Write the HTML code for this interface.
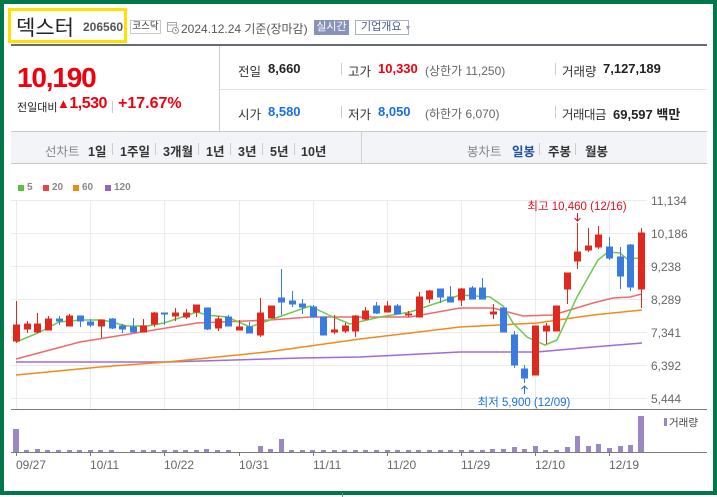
<!DOCTYPE html>
<html><head><meta charset="utf-8">
<style>
*{margin:0;padding:0;box-sizing:border-box}
body{width:717px;height:497px;background:#fff;font-family:"Liberation Sans","Noto Sans CJK KR",sans-serif;position:relative;overflow:hidden;color:#333}
.a{position:absolute;white-space:nowrap}
.frame{position:absolute;left:0;top:0;width:717px;height:495px;border:4px solid #00794a;border-top-width:4px}
.lbl{font-size:12.5px;color:#333}
.val{font-size:13px;font-weight:bold;color:#222}
.red{color:#f0000f}.blue{color:#1a6fe0}
.sep{position:absolute;width:1px;height:12px;background:#ccc}
.pb{font-size:12.5px;color:#333;font-weight:bold}
</style></head><body>
<!-- header -->
<div class="a" style="left:8px;top:8px;width:119px;height:35px;border:3px solid #ffe000"></div>
<div class="a" style="left:16px;top:12px;font-size:21px;color:#222">덱스터</div>
<div class="a" style="left:83px;top:20px;font-size:12px;font-weight:bold;color:#555">206560</div>
<div class="a" style="left:130px;top:20px;width:31px;height:14px;border:1px solid #c8c8c8;font-size:9.5px;line-height:12px;text-align:center;color:#333">코스닥</div>
<svg class="a" style="left:167px;top:21px" width="12" height="13" viewBox="0 0 12 13"><rect x="0.5" y="1.5" width="9" height="9" fill="none" stroke="#aaa"/><line x1="0.5" y1="4" x2="9.5" y2="4" stroke="#aaa"/><circle cx="8.5" cy="9.5" r="3" fill="#fff" stroke="#999"/><path d="M8.5 8v1.6h1.3" stroke="#999" fill="none"/></svg>
<div class="a" style="left:181px;top:20px;font-size:12px;color:#555">2024.12.24 기준(장마감)</div>
<div class="a" style="left:314px;top:20px;width:35px;height:15px;background:#8793b8;color:#fff;font-size:11px;line-height:15px;text-align:center">실시간</div>
<div class="a" style="left:355px;top:20px;width:54px;height:15px;border:1px solid #a8b0c8;color:#4a5a8a;font-size:11px;line-height:13px;padding-left:5px">기업개요 <span style="font-size:7px;color:#99a">▼</span></div>
<!-- info -->
<div class="a" style="left:11px;top:44px;width:696px;height:2px;background:#666a73"></div>
<div class="a" style="left:219px;top:46px;width:1px;height:86px;background:#ccc"></div>
<div class="a" style="left:220px;top:89px;width:487px;height:1px;background:#e3e3e3"></div>
<div class="a" style="left:17px;top:62px;font-size:28px;font-weight:bold;color:#f0000f;letter-spacing:-1.2px">10,190</div>
<div class="a" style="left:17px;top:99px;font-size:11px;color:#222">전일대비</div>
<div class="a" style="left:57px;top:95px;font-size:16px;font-weight:bold;color:#f0000f;letter-spacing:-0.5px"><span style="font-size:13px">▲</span>1,530</div>
<div class="sep" style="left:112px;top:101px"></div>
<div class="a" style="left:118px;top:95px;font-size:16px;font-weight:bold;color:#f0000f">+17.67%</div>

<div class="a lbl" style="left:238px;top:61px">전일</div><div class="a val" style="left:268px;top:61px">8,660</div>
<div class="sep" style="left:341px;top:63px"></div>
<div class="a lbl" style="left:348px;top:61px">고가</div><div class="a val red" style="left:378px;top:61px">10,330</div>
<div class="a" style="left:425px;top:62px;font-size:12px;color:#666">(상한가 11,250)</div>
<div class="sep" style="left:555px;top:63px"></div>
<div class="a lbl" style="left:562px;top:61px">거래량</div><div class="a val" style="left:603px;top:61px">7,127,189</div>

<div class="a lbl" style="left:238px;top:104px">시가</div><div class="a val blue" style="left:268px;top:104px">8,580</div>
<div class="sep" style="left:341px;top:106px"></div>
<div class="a lbl" style="left:348px;top:104px">저가</div><div class="a val blue" style="left:378px;top:104px">8,050</div>
<div class="a" style="left:425px;top:105px;font-size:12px;color:#666">(하한가 6,070)</div>
<div class="sep" style="left:555px;top:106px"></div>
<div class="a lbl" style="left:562px;top:104px;letter-spacing:-0.5px">거래대금</div><div class="a val" style="left:613px;top:104px">69,597 백만</div>
<!-- period bar -->
<div class="a" style="left:11px;top:131px;width:696px;height:33px;background:#f3f4f7;border-top:1px solid #c8c8c8;border-bottom:1px solid #c8c8c8"></div>
<div class="a" style="left:361px;top:132px;width:1px;height:31px;background:#d0d0d0"></div>
<div class="a" style="left:45px;top:141px;font-size:12.5px;color:#888">선차트</div>
<div class="a pb" style="left:88px;top:141px">1일</div><div class="sep" style="left:112px;top:143px"></div>
<div class="a pb" style="left:120px;top:141px">1주일</div><div class="sep" style="left:155px;top:143px"></div>
<div class="a pb" style="left:163px;top:141px">3개월</div><div class="sep" style="left:198px;top:143px"></div>
<div class="a pb" style="left:206px;top:141px">1년</div><div class="sep" style="left:230px;top:143px"></div>
<div class="a pb" style="left:238px;top:141px">3년</div><div class="sep" style="left:262px;top:143px"></div>
<div class="a pb" style="left:270px;top:141px">5년</div><div class="sep" style="left:294px;top:143px"></div>
<div class="a pb" style="left:301px;top:141px">10년</div>
<div class="a" style="left:467px;top:141px;font-size:12.5px;color:#888">봉차트</div>
<div class="a pb" style="left:512px;top:141px;color:#2050a0">일봉</div><div class="sep" style="left:539px;top:143px"></div>
<div class="a pb" style="left:548px;top:141px">주봉</div><div class="sep" style="left:575px;top:143px"></div>
<div class="a pb" style="left:585px;top:141px">월봉</div>
<!-- legend -->
<div class="a" style="left:18px;top:185px;width:6px;height:6px;background:#5cbf3f"></div><div class="a" style="left:27px;top:182px;font-size:10px;font-weight:bold;color:#888">5</div>
<div class="a" style="left:43px;top:185px;width:6px;height:6px;background:#e84545"></div><div class="a" style="left:52px;top:182px;font-size:10px;font-weight:bold;color:#888">20</div>
<div class="a" style="left:73px;top:185px;width:6px;height:6px;background:#f28a1a"></div><div class="a" style="left:82px;top:182px;font-size:10px;font-weight:bold;color:#888">60</div>
<div class="a" style="left:105px;top:185px;width:6px;height:6px;background:#9a5fcf"></div><div class="a" style="left:114px;top:182px;font-size:10px;font-weight:bold;color:#888">120</div>

<svg class="a" style="left:0;top:0" width="717" height="497" viewBox="0 0 717 497">
<g stroke="#ebebeb" stroke-width="1">
<line x1="11" y1="200.5" x2="647" y2="200.5"/><line x1="11" y1="233.5" x2="647" y2="233.5"/><line x1="11" y1="266.5" x2="647" y2="266.5"/><line x1="11" y1="299.5" x2="647" y2="299.5"/><line x1="11" y1="332.5" x2="647" y2="332.5"/><line x1="11" y1="365.5" x2="647" y2="365.5"/><line x1="11" y1="398.5" x2="647" y2="398.5"/>
<line x1="16.5" y1="200" x2="16.5" y2="409"/><line x1="90.5" y1="200" x2="90.5" y2="409"/><line x1="164.5" y1="200" x2="164.5" y2="409"/><line x1="239.5" y1="200" x2="239.5" y2="409"/><line x1="313.5" y1="200" x2="313.5" y2="409"/><line x1="387.5" y1="200" x2="387.5" y2="409"/><line x1="461.5" y1="200" x2="461.5" y2="409"/><line x1="535.5" y1="200" x2="535.5" y2="409"/><line x1="609.5" y1="200" x2="609.5" y2="409"/>
</g>
<line x1="11" y1="409.5" x2="707" y2="409.5" stroke="#7a7a7a"/>
<line x1="11" y1="452.5" x2="707" y2="452.5" stroke="#7a7a7a"/>
<g stroke="#7a7a7a"><line x1="16.5" y1="452" x2="16.5" y2="456"/><line x1="90.5" y1="452" x2="90.5" y2="456"/><line x1="164.5" y1="452" x2="164.5" y2="456"/><line x1="239.5" y1="452" x2="239.5" y2="456"/><line x1="313.5" y1="452" x2="313.5" y2="456"/><line x1="387.5" y1="452" x2="387.5" y2="456"/><line x1="461.5" y1="452" x2="461.5" y2="456"/><line x1="535.5" y1="452" x2="535.5" y2="456"/><line x1="609.5" y1="452" x2="609.5" y2="456"/></g>
<!-- MAs -->
<polyline fill="none" stroke="#a06ad8" stroke-width="1.5" points="16,362 167,362 300,358 360,357 460,352 537,352 593,347 642,343"/>
<polyline fill="none" stroke="#f28a1a" stroke-width="1.5" points="16,375 100,367 167,362 267,352 360,339 460,327 537,323 593,315 642,310"/>
<polyline fill="none" stroke="#f06a6a" stroke-width="1.5" points="16,359 80,342 197,323 270,320 310,317 360,317 410,317 460,308 493,308 523,316 553,315 593,303 613,298 630,297 642,294"/>
<polyline fill="none" stroke="#70c850" stroke-width="1.5" points="16,342 38,333 59,322 80,320 103,320 127,326 147,326 164,323 197,312 207,315 227,317 250,327 270,320 310,306 333,317 350,324 380,317 410,312 440,302 460,295 490,297 503,306 513,323 527,337 545,345 557,340 577,297 598,260 608,252 620,253 627,259 640,258"/>
<!-- candles -->
<g stroke-width="1">
<g fill="#e0281e" stroke="#e0281e">
<line x1="16.5" y1="301" x2="16.5" y2="343"/><rect x="13.5" y="325" width="6" height="16"/>
<line x1="27.5" y1="321" x2="27.5" y2="333"/><rect x="24.5" y="324" width="6" height="5"/>
<line x1="37.5" y1="313" x2="37.5" y2="333"/><rect x="34.5" y="324" width="6" height="8"/>
<line x1="48.5" y1="316" x2="48.5" y2="330"/><rect x="45.5" y="319" width="6" height="11"/>
<line x1="69.5" y1="314" x2="69.5" y2="326"/><rect x="66.5" y="316" width="6" height="10"/>
<line x1="101.5" y1="320" x2="101.5" y2="338"/><rect x="98.5" y="320" width="6" height="6"/>
<line x1="143.5" y1="319" x2="143.5" y2="332"/><rect x="140.5" y="326" width="6" height="6"/>
<line x1="154.5" y1="312" x2="154.5" y2="327"/><rect x="151.5" y="313" width="6" height="11"/>
<line x1="175.5" y1="308" x2="175.5" y2="321"/><rect x="172.5" y="313" width="6" height="3"/>
<line x1="186.5" y1="309" x2="186.5" y2="319"/><rect x="183.5" y="313" width="6" height="4"/>
<line x1="196.5" y1="305" x2="196.5" y2="317"/><rect x="193.5" y="305" width="6" height="7"/>
<line x1="218.5" y1="316" x2="218.5" y2="331"/><rect x="215.5" y="319" width="6" height="9"/>
<line x1="239.5" y1="320" x2="239.5" y2="330"/><rect x="236.5" y="327" width="6" height="3"/>
<line x1="260.5" y1="298" x2="260.5" y2="337"/><rect x="257.5" y="313" width="6" height="22"/>
<rect x="268.5" y="306" width="6" height="12"/>
<line x1="334.5" y1="315" x2="334.5" y2="334"/><rect x="331.5" y="330" width="6" height="2"/>
<line x1="345.5" y1="323" x2="345.5" y2="333"/><rect x="342.5" y="326" width="6" height="5"/>
<line x1="355.5" y1="315" x2="355.5" y2="337"/><rect x="352.5" y="316" width="6" height="15"/>
<line x1="365.5" y1="307" x2="365.5" y2="320"/><rect x="362.5" y="311" width="6" height="8"/>
<line x1="387.5" y1="301" x2="387.5" y2="312"/><rect x="384.5" y="306" width="6" height="6"/>
<line x1="408.5" y1="311" x2="408.5" y2="317"/><rect x="405.5" y="314" width="6" height="1"/>
<line x1="419.5" y1="292" x2="419.5" y2="317"/><rect x="416.5" y="297" width="6" height="20"/>
<line x1="429.5" y1="290" x2="429.5" y2="303"/><rect x="426.5" y="291" width="6" height="8"/>
<line x1="461.5" y1="288" x2="461.5" y2="306"/><rect x="458.5" y="289" width="6" height="11"/>
<line x1="493.5" y1="304" x2="493.5" y2="319"/><rect x="490.5" y="312" width="6" height="2"/>
<rect x="532.5" y="326" width="6" height="49"/>
<line x1="546.5" y1="323" x2="546.5" y2="344"/><rect x="543.5" y="326" width="6" height="5"/>
<rect x="553.5" y="306" width="6" height="25"/>
<line x1="567.5" y1="273" x2="567.5" y2="304"/><rect x="564.5" y="273" width="6" height="16"/>
<line x1="577.5" y1="223" x2="577.5" y2="269"/><rect x="574.5" y="252" width="6" height="9"/>
<line x1="588.5" y1="228" x2="588.5" y2="252"/><rect x="585.5" y="246" width="6" height="4"/>
<line x1="598.5" y1="226" x2="598.5" y2="249"/><rect x="595.5" y="235" width="6" height="12"/>
<line x1="641.5" y1="228" x2="641.5" y2="308"/><rect x="638.5" y="233" width="6" height="56"/>
</g>
<g fill="#3a7be0" stroke="#3a7be0">
<line x1="59.5" y1="316" x2="59.5" y2="325"/><rect x="56.5" y="319" width="6" height="2"/>
<line x1="80.5" y1="316" x2="80.5" y2="327"/><rect x="77.5" y="316" width="6" height="5"/>
<line x1="90.5" y1="319" x2="90.5" y2="327"/><rect x="87.5" y="322" width="6" height="3"/>
<line x1="112.5" y1="318" x2="112.5" y2="329"/><rect x="109.5" y="319" width="6" height="9"/>
<line x1="122.5" y1="324" x2="122.5" y2="333"/><rect x="119.5" y="326" width="6" height="3"/>
<line x1="133.5" y1="318" x2="133.5" y2="332"/><rect x="130.5" y="327" width="6" height="5"/>
<line x1="164.5" y1="313" x2="164.5" y2="325"/><rect x="161.5" y="313" width="6" height="1"/>
<line x1="207.5" y1="308" x2="207.5" y2="330"/><rect x="204.5" y="308" width="6" height="21"/>
<line x1="228.5" y1="315" x2="228.5" y2="326"/><rect x="225.5" y="317" width="6" height="9"/>
<line x1="249.5" y1="322" x2="249.5" y2="333"/><rect x="246.5" y="327" width="6" height="6"/>
<line x1="281.5" y1="269" x2="281.5" y2="315"/><rect x="278.5" y="298" width="6" height="4"/>
<line x1="292.5" y1="291" x2="292.5" y2="307"/><rect x="289.5" y="301" width="6" height="3"/>
<line x1="302.5" y1="299" x2="302.5" y2="314"/><rect x="299.5" y="304" width="6" height="3"/>
<line x1="313.5" y1="305" x2="313.5" y2="317"/><rect x="310.5" y="307" width="6" height="10"/>
<rect x="320.5" y="317" width="6" height="18"/>
<line x1="376.5" y1="302" x2="376.5" y2="314"/><rect x="373.5" y="306" width="6" height="7"/>
<line x1="397.5" y1="304" x2="397.5" y2="314"/><rect x="394.5" y="306" width="6" height="8"/>
<line x1="440.5" y1="289" x2="440.5" y2="303"/><rect x="437.5" y="289" width="6" height="8"/>
<line x1="450.5" y1="286" x2="450.5" y2="302"/><rect x="447.5" y="297" width="6" height="5"/>
<line x1="472.5" y1="286" x2="472.5" y2="299"/><rect x="469.5" y="288" width="6" height="11"/>
<line x1="482.5" y1="278" x2="482.5" y2="299"/><rect x="479.5" y="288" width="6" height="11"/>
<line x1="503.5" y1="307" x2="503.5" y2="332"/><rect x="500.5" y="308" width="6" height="24"/>
<line x1="514.5" y1="331" x2="514.5" y2="368"/><rect x="511.5" y="335" width="6" height="30"/>
<line x1="524.5" y1="365" x2="524.5" y2="383"/><rect x="521.5" y="369" width="6" height="9"/>
<line x1="609.5" y1="237" x2="609.5" y2="260"/><rect x="606.5" y="247" width="6" height="11"/>
<line x1="620.5" y1="247" x2="620.5" y2="289"/><rect x="617.5" y="257" width="6" height="19"/>
<line x1="630.5" y1="244" x2="630.5" y2="291"/><rect x="627.5" y="245" width="6" height="42"/>
</g></g>
<!-- volume -->
<g fill="#9b87c4">
<rect x="13" y="429" width="6" height="23"/>
<rect x="24" y="450" width="5" height="2"/><rect x="35" y="449" width="5" height="3"/><rect x="45" y="450" width="5" height="2"/><rect x="56" y="450" width="5" height="2"/><rect x="67" y="450" width="5" height="2"/><rect x="77" y="450" width="5" height="2"/><rect x="88" y="450" width="5" height="2"/><rect x="98" y="450" width="5" height="2"/><rect x="109" y="450" width="5" height="2"/><rect x="130" y="450" width="5" height="2"/><rect x="141" y="450" width="5" height="2"/><rect x="151" y="450" width="5" height="2"/><rect x="162" y="450" width="5" height="2"/><rect x="173" y="450" width="5" height="2"/><rect x="183" y="450" width="5" height="2"/><rect x="194" y="450" width="5" height="2"/><rect x="204" y="449" width="5" height="3"/><rect x="215" y="450" width="5" height="2"/><rect x="226" y="450" width="5" height="2"/>
<rect x="258" y="446" width="5" height="6"/><rect x="268" y="449" width="5" height="3"/><rect x="279" y="439" width="5" height="13"/><rect x="289" y="450" width="5" height="2"/><rect x="300" y="450" width="5" height="2"/><rect x="310" y="450" width="5" height="2"/><rect x="321" y="450" width="5" height="2"/><rect x="332" y="450" width="5" height="2"/><rect x="342" y="450" width="5" height="2"/><rect x="353" y="450" width="5" height="2"/><rect x="363" y="450" width="5" height="2"/><rect x="374" y="450" width="5" height="2"/><rect x="385" y="450" width="5" height="2"/><rect x="395" y="450" width="5" height="2"/><rect x="406" y="450" width="5" height="2"/><rect x="416" y="450" width="5" height="2"/><rect x="427" y="450" width="5" height="2"/><rect x="438" y="450" width="5" height="2"/><rect x="448" y="450" width="5" height="2"/><rect x="459" y="450" width="5" height="2"/><rect x="469" y="450" width="5" height="2"/><rect x="480" y="450" width="5" height="2"/><rect x="490" y="449" width="5" height="3"/><rect x="501" y="449" width="5" height="3"/><rect x="512" y="447" width="5" height="5"/><rect x="522" y="449" width="5" height="3"/><rect x="533" y="446" width="5" height="6"/><rect x="543" y="450" width="5" height="2"/><rect x="554" y="450" width="5" height="2"/><rect x="565" y="447" width="5" height="5"/><rect x="575" y="436" width="5" height="16"/><rect x="586" y="446" width="5" height="6"/><rect x="596" y="444" width="5" height="8"/><rect x="607" y="448" width="5" height="4"/><rect x="618" y="446" width="5" height="6"/><rect x="628" y="445" width="5" height="7"/><rect x="638" y="416" width="6" height="36"/>
<rect x="664" y="418" width="3" height="8"/>
</g>
<!-- annotations -->
<text x="577" y="210" font-size="11.5" fill="#e0101f" text-anchor="middle" font-family="Liberation Sans,Noto Sans CJK KR,sans-serif">최고 10,460 (12/16)</text>
<path d="M577.5 213v8M574.5 218l3 3 3-3" stroke="#e0101f" fill="none"/>
<text x="524" y="406" font-size="11.5" fill="#1a6fe0" text-anchor="middle" font-family="Liberation Sans,Noto Sans CJK KR,sans-serif">최저 5,900 (12/09)</text>
<path d="M524.5 394v-8M521.5 389l3-3 3 3" stroke="#1a6fe0" fill="none"/>
<g font-size="12" fill="#666" font-family="Liberation Sans,sans-serif">
<text x="651" y="205">11,134</text><text x="651" y="238">10,186</text><text x="651" y="271">9,238</text><text x="651" y="304">8,289</text><text x="651" y="337">7,341</text><text x="651" y="370">6,392</text><text x="651" y="403">5,444</text>
<text x="16" y="469">09/27</text><text x="90" y="469">10/11</text><text x="164" y="469">10/22</text><text x="239" y="469">10/31</text><text x="313" y="469">11/11</text><text x="387" y="469">11/20</text><text x="461" y="469">11/29</text><text x="535" y="469">12/10</text><text x="609" y="469">12/19</text>
</g>
<text x="669" y="426" font-size="10.5" fill="#444" font-family="Liberation Sans,Noto Sans CJK KR,sans-serif">거래량</text>
</svg>
<div class="frame"></div>
<div class="a" style="left:342px;top:493px;width:1px;height:4px;background:#888"></div>
</body></html>
